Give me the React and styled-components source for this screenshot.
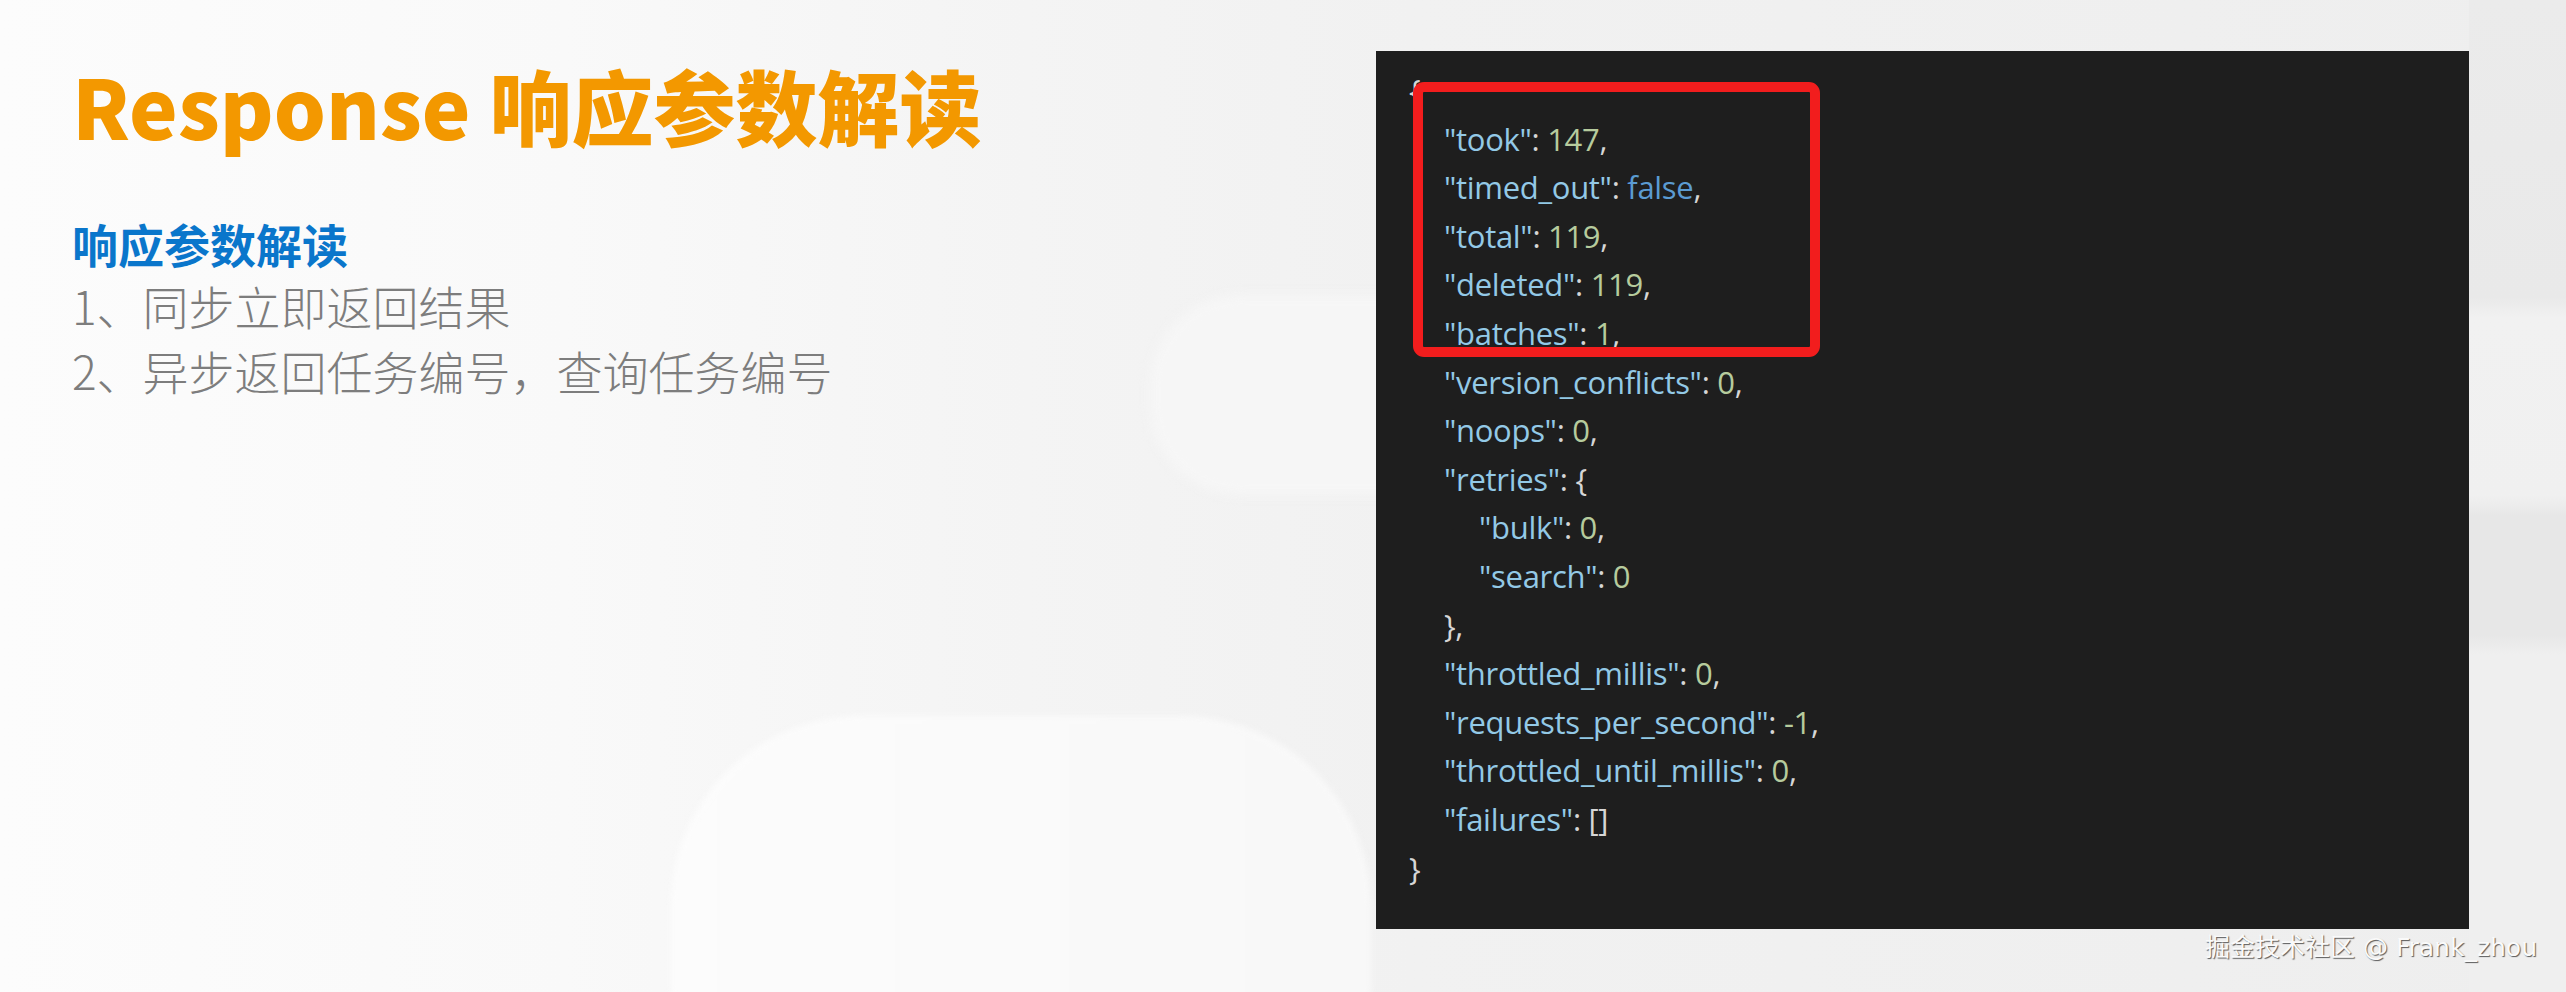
import styled, { createGlobalStyle } from "styled-components";

const GlobalStyle = createGlobalStyle`
  html, body {
    margin: 0;
    padding: 0;
    background: #f4f4f4;
  }
`;

const json = [
  { depth: 0, parts: [["p", "{"]] },
  { depth: 1, parts: [["k", '"took"'], ["p", ": "], ["n", "147"], ["p", ","]] },
  { depth: 1, parts: [["k", '"timed_out"'], ["p", ": "], ["b", "false"], ["p", ","]] },
  { depth: 1, parts: [["k", '"total"'], ["p", ": "], ["n", "119"], ["p", ","]] },
  { depth: 1, parts: [["k", '"deleted"'], ["p", ": "], ["n", "119"], ["p", ","]] },
  { depth: 1, parts: [["k", '"batches"'], ["p", ": "], ["n", "1"], ["p", ","]] },
  { depth: 1, parts: [["k", '"version_conflicts"'], ["p", ": "], ["n", "0"], ["p", ","]] },
  { depth: 1, parts: [["k", '"noops"'], ["p", ": "], ["n", "0"], ["p", ","]] },
  { depth: 1, parts: [["k", '"retries"'], ["p", ": {"]] },
  { depth: 2, parts: [["k", '"bulk"'], ["p", ": "], ["n", "0"], ["p", ","]] },
  { depth: 2, parts: [["k", '"search"'], ["p", ": "], ["n", "0"]] },
  { depth: 1, parts: [["p", "},"]] },
  { depth: 1, parts: [["k", '"throttled_millis"'], ["p", ": "], ["n", "0"], ["p", ","]] },
  { depth: 1, parts: [["k", '"requests_per_second"'], ["p", ": "], ["n", "-1"], ["p", ","]] },
  { depth: 1, parts: [["k", '"throttled_until_millis"'], ["p", ": "], ["n", "0"], ["p", ","]] },
  { depth: 1, parts: [["k", '"failures"'], ["p", ": []"]] },
  { depth: 0, parts: [["p", "}"]] },
];

const tokenColors = {
  k: "#93c9e6",
  p: "#d6d6d6",
  n: "#b6cb9d",
  b: "#5b9bd2",
};

export default function App() {
  return (
    <>
      <GlobalStyle />
      <Page>
        <Intro>
          <Title>Response 响应参数解读</Title>
          <Subtitle>响应参数解读</Subtitle>
          <Point>1、同步立即返回结果</Point>
          <Point>2、异步返回任务编号，查询任务编号</Point>
        </Intro>
        <CodePanel>
          <Highlight />
          {json.map((line, i) => (
            <CodeLine key={i} $depth={line.depth}>
              {line.parts.map(([kind, text], j) => (
                <Token key={j} $kind={kind}>
                  {text}
                </Token>
              ))}
            </CodeLine>
          ))}
        </CodePanel>
        <Watermark>掘金技术社区 @ Frank_zhou</Watermark>
      </Page>
    </>
  );
}

const Page = styled.div`
  position: relative;
  width: 2566px;
  height: 992px;
  overflow: hidden;
  display: flex;
  align-items: flex-start;
  box-sizing: border-box;
  padding: 51px 97px 0 0;
  background:
    linear-gradient(
        180deg,
        #ebebeb 0%,
        #e9e9e9 30%,
        #f1f1f1 32%,
        #f0f0f0 50%,
        #e7e7e7 52%,
        #e7e7e7 64%,
        #efefef 66%,
        #efefef 100%
      )
      right top / 97px 100% no-repeat,
    linear-gradient(90deg, #fcfcfc 0%, #f9f9f9 22%, #f4f4f4 40%, #f1f1f1 55%, #eeeeee 100%);

  &::before {
    content: "";
    position: absolute;
    left: 671px;
    top: 716px;
    width: 700px;
    height: 460px;
    border-radius: 190px;
    background: linear-gradient(90deg, #fcfcfc, #f8f8f8);
    filter: blur(3px);
  }

  &::after {
    content: "";
    position: absolute;
    left: 1150px;
    top: 295px;
    width: 400px;
    height: 200px;
    border-radius: 90px;
    background: #f6f6f6;
    filter: blur(6px);
  }
`;

const Intro = styled.div`
  position: relative;
  z-index: 1;
  flex: 1;
  padding: 13px 0 0 72px;
  font-family: "Noto Sans CJK SC", "Noto Sans", sans-serif;
`;

const Title = styled.h1`
  margin: 0;
  font-size: 82px;
  line-height: 1;
  font-weight: 900;
  color: #f39800;
  letter-spacing: 0;
  white-space: nowrap;
`;

const Subtitle = styled.h2`
  margin: 70px 0 0;
  font-size: 46px;
  line-height: 54px;
  font-weight: 700;
  color: #0a76cb;
`;

const Point = styled.p`
  margin: 0;
  font-size: 46px;
  line-height: 65px;
  font-weight: 300;
  color: #7d7d7d;
  white-space: nowrap;

  &:first-of-type {
    margin-top: 3px;
  }
`;

const CodePanel = styled.div`
  position: relative;
  z-index: 1;
  width: 1093px;
  height: 878px;
  box-sizing: border-box;
  padding: 15px 0 0 33px;
  background: #1e1e1e;
  font-family: "Open Sans", "Noto Sans", sans-serif;
  font-size: 31px;
  letter-spacing: -0.3px;
`;

const CodeLine = styled.div`
  height: 48.6px;
  line-height: 48.6px;
  padding-left: ${(p) => p.$depth * 35}px;
  white-space: pre;
`;

const Token = styled.span`
  color: ${(p) => tokenColors[p.$kind]};
`;

const Highlight = styled.div`
  position: absolute;
  left: 37px;
  top: 31px;
  width: 407px;
  height: 275px;
  box-sizing: border-box;
  border: 10px solid #f21d1d;
  border-radius: 11px;
  pointer-events: none;
  z-index: 2;
`;

const Watermark = styled.div`
  position: absolute;
  right: 29px;
  bottom: 30px;
  z-index: 2;
  font-family: "DejaVu Sans", "Noto Sans CJK SC", sans-serif;
  font-size: 25px;
  line-height: 28px;
  color: #fafafa;
  text-shadow: 1px 1px 1px #5a5a5a;
  white-space: nowrap;
`;
